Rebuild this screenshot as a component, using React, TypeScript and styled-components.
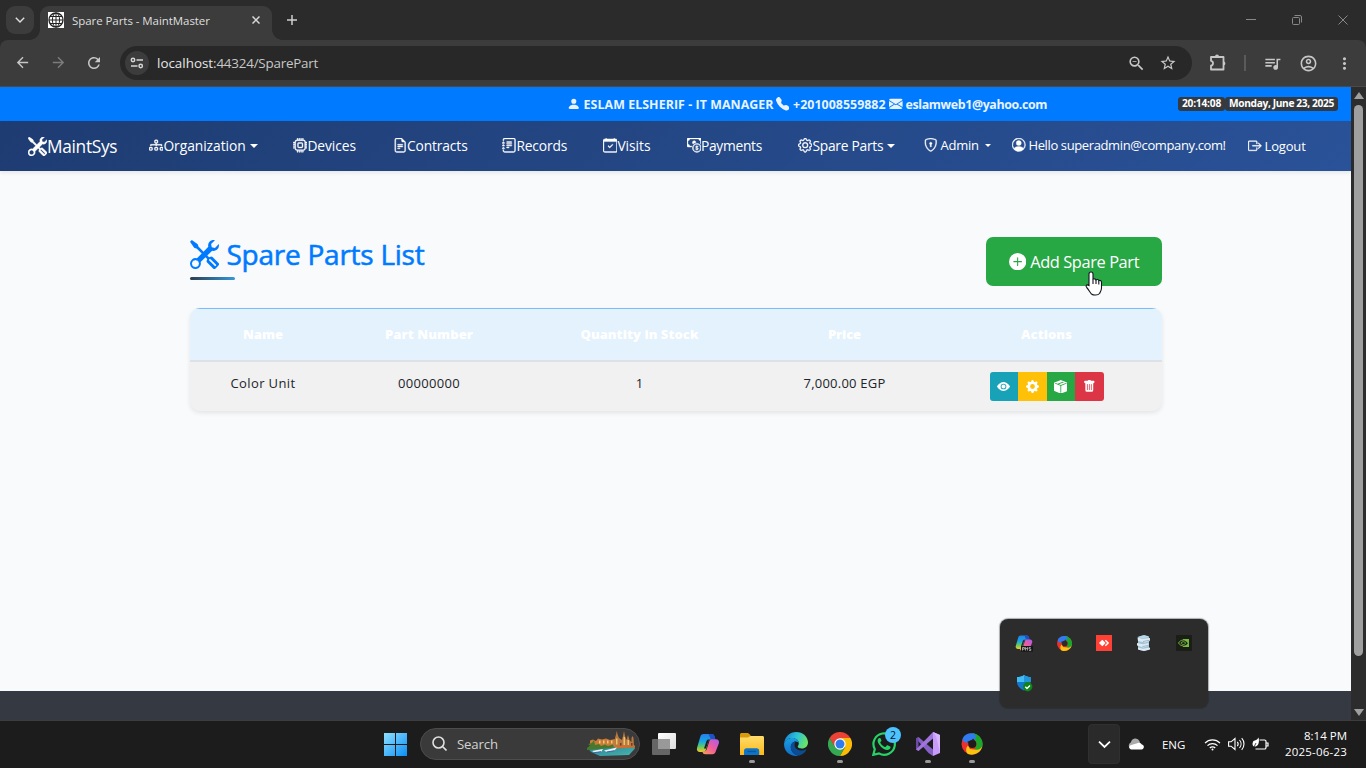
import React from 'react';
import styled, { createGlobalStyle } from 'styled-components';
import {
  BsTools, BsDiagram3, BsCpu, BsFileEarmarkText, BsJournalText, BsCalendarCheck, BsCashCoin, BsGear,
  BsShieldLock, BsPersonCircle, BsBoxArrowRight, BsPersonFill, BsTelephoneFill, BsEnvelopeFill,
  BsPlusCircleFill, BsEyeFill, BsGearFill, BsBoxSeamFill, BsTrashFill,
} from 'react-icons/bs';
import {
  MdArrowBack, MdArrowForward, MdRefresh, MdStarOutline, MdQueueMusic,
  MdOutlineAccountCircle, MdMoreVert, MdOutlineZoomOut,
} from 'react-icons/md';

const Global = createGlobalStyle`
  * { box-sizing: border-box; }
  body { margin: 0; font-family: "Open Sans", "Noto Sans", sans-serif; overflow: hidden; }
  svg { display: block; flex: none; }
`;

const Screen = styled.div`
  position: relative;
  display: flex;
  flex-direction: column;
  width: 1366px;
  height: 768px;
  overflow: hidden;
  background: #2b2b2b;
`;

const Label = styled.span<{ $ls?: number }>`
  letter-spacing: ${p => p.$ls ?? 0}px;
  white-space: nowrap;
`;

/* ---------- Browser chrome ---------- */

const TabStrip = styled.div`
  display: flex;
  height: 40px;
  padding: 6px 0 0 6px;
  background: #2b2b2b;
  color: #dfdfdf;
`;

const TabSearch = styled.div`
  display: grid;
  place-items: center;
  width: 28px;
  height: 28px;
  margin-right: 6px;
  border-radius: 9px;
  background: #3c3c3c;
`;

const Tab = styled.div`
  position: relative;
  display: flex;
  align-items: center;
  width: 232px;
  height: 34px;
  padding: 0 12px 6px 8px;
  border-radius: 9px 9px 0 0;
  background: #3c3c3c;
  font-size: 11.5px;
  &::before, &::after {
    content: "";
    position: absolute;
    bottom: 0;
    width: 10px;
    height: 10px;
  }
  &::before { left: -10px; background: radial-gradient(circle at 0 0, transparent 9.5px, #3c3c3c 10px); }
  &::after { right: -10px; background: radial-gradient(circle at 100% 0, transparent 9.5px, #3c3c3c 10px); }
`;

const TabTitle = styled(Label)`
  flex: 1;
  margin-left: 8px;
`;

const NewTab = styled.div`
  display: grid;
  place-items: center;
  width: 28px;
  height: 28px;
  margin-left: 6px;
`;

const WindowButtons = styled.div`
  display: flex;
  height: 28px;
  margin-left: auto;
  & > div { display: grid; place-items: center; width: 46px; }
`;

const Toolbar = styled.div`
  display: flex;
  align-items: center;
  height: 47px;
  padding: 0 13px 1px 13px;
  border-bottom: 1px solid #4a4a4a;
  border-radius: 8px 8px 0 0;
  background: #3c3c3c;
  color: #c7c7c7;
`;

const ToolIcon = styled.div<{ $ml?: number; $dim?: boolean }>`
  display: grid;
  place-items: center;
  width: 18px;
  height: 18px;
  margin-left: ${p => p.$ml ?? 0}px;
  color: ${p => (p.$dim ? '#7c7c7c' : 'inherit')};
`;

const Omnibox = styled.div`
  display: flex;
  align-items: center;
  width: 1072px;
  height: 34px;
  margin-left: 17px;
  padding: 0 15px 0 5px;
  border-radius: 17px;
  background: #282828;
  font-size: 13.4px;
  color: #c7c7c7;
`;

const SiteInfo = styled.div`
  display: grid;
  place-items: center;
  width: 24px;
  height: 24px;
  margin-right: 8px;
  border-radius: 50%;
  background: #3c3c3c;
`;

const Host = styled(Label)`color: #e6e6e6;`;
const Grow = styled.div`flex: 1;`;
const Separator = styled.div`
  width: 2px;
  height: 16px;
  margin-left: 17px;
  background: #5a5a5a;
`;

/* ---------- Web page ---------- */

const Viewport = styled.div`
  display: flex;
  height: 633px;
`;

const Page = styled.div`
  display: flex;
  flex-direction: column;
  width: 1351px;
  background: #f8fafc;
`;

const ContactBar = styled.div`
  display: flex;
  align-items: center;
  height: 34px;
  padding: 0 13px 0 567px;
  background: #007bff;
  color: #e9f3ff;
  font-size: 12.4px;
  font-weight: 700;
`;

const Contact = styled.div<{ $w: number; $gap: number }>`
  display: flex;
  align-items: center;
  gap: ${p => p.$gap}px;
  width: ${p => p.$w}px;
`;

const Stamp = styled.div<{ $w: number }>`
  display: grid;
  place-items: center;
  width: ${p => p.$w}px;
  height: 14px;
  border-radius: 3px;
  background: #343a40;
  color: #fff;
  font-size: 10.2px;
  line-height: 13px;
  padding-bottom: 1px;
`;

const Navbar = styled.nav`
  position: relative;
  display: flex;
  height: 50px;
  padding-left: 28px;
  background: linear-gradient(135deg, #1e3c72 0%, #2a5298 100%);
  box-shadow: 0 2px 4px rgba(0, 0, 0, 0.08);
  color: #fff;
`;

const Brand = styled.div`
  display: flex;
  align-items: center;
  width: 121px;
  padding-top: 1px;
  font-size: 17.3px;
  & svg { stroke-width: 0.4; }
`;

const NavItem = styled.div<{ $w: number; $gap?: number; $up?: number; $size?: number }>`
  display: flex;
  align-items: center;
  gap: ${p => p.$gap ?? 0}px;
  width: ${p => p.$w}px;
  padding-bottom: ${p => p.$up ?? 1}px;
  font-size: ${p => p.$size ?? 13.8}px;
  & svg { stroke-width: 0.45; }
`;

const Caret = styled.i<{ $ml: number; $s?: number }>`
  margin-left: ${p => p.$ml}px;
  border: ${p => p.$s ?? 4}px solid transparent;
  border-top-color: currentColor;
  border-bottom: 0;
`;

const Main = styled.main`
  flex: 1;
  padding: 66px 189px 0 190px;
`;

const TitleRow = styled.div`
  display: flex;
  justify-content: space-between;
  height: 71px;
`;

const Title = styled.h2`
  display: flex;
  flex-direction: column;
  height: 43px;
  margin: 0;
  color: #007bff;
  font-size: 28px;
  font-weight: 500;
  -webkit-text-stroke: 0.55px currentColor;
`;

const TitleLine = styled.div`
  display: flex;
  align-items: center;
  gap: 7.5px;
  height: 34px;
  margin-bottom: 6px;
`;

const Underline = styled.div`
  width: 45px;
  height: 3px;
  border-radius: 2px;
  background: linear-gradient(90deg, #2c3e50, #3498db);
`;

const AddButton = styled.button`
  display: flex;
  align-items: center;
  justify-content: center;
  gap: 4px;
  width: 176px;
  height: 49px;
  padding: 0;
  border: 0;
  border-radius: 7px;
  background: #28a745;
  color: #fff;
  font: 400 16.4px "Open Sans", sans-serif;
`;

const Table = styled.div`
  overflow: hidden;
  height: 103px;
  border-radius: 10px;
  background: #f1f1f1;
  box-shadow: 0 2px 5px rgba(0, 0, 0, 0.09);
  font-size: 13px;
`;

const Row = styled.div`
  display: grid;
  grid-template-columns: 146px 186px 235px 175px 229px;
  justify-items: center;
`;

const HeadRow = styled(Row)`
  align-items: center;
  height: 54px;
  padding-bottom: 1px;
  border-top: 1px solid #7abaff;
  border-bottom: 2px solid #dee2e6;
  background: #e3f2fd;
  color: #fff;
  font-weight: 800;
`;

const BodyRow = styled(Row)`
  height: 49px;
  padding-top: 10px;
  color: #212529;
  & > span { line-height: 22px; }
`;

const Actions = styled.div`
  display: flex;
  height: 29px;
  overflow: hidden;
  border-radius: 3px;
`;

const Action = styled.button<{ $bg: string; $w: number }>`
  display: grid;
  place-items: center;
  width: ${p => p.$w}px;
  padding: 0;
  border: 0;
  background: ${p => p.$bg};
  color: #fff;
`;

const Footer = styled.footer`
  height: 29px;
  background: #353a42;
`;

const Scrollbar = styled.div`
  display: flex;
  flex-direction: column;
  align-items: center;
  justify-content: space-between;
  width: 15px;
  padding: 5px 0 4px;
  background: #2c2c2c;
`;

const ScrollArrow = styled.i<{ $down?: boolean }>`
  border: 5px solid transparent;
  ${p => (p.$down ? 'border-top: 7px solid #9f9f9f; border-bottom: 0;' : 'border-bottom: 7px solid #9f9f9f; border-top: 0;')}
`;

const Thumb = styled.div`
  width: 9px;
  height: 551px;
  margin-bottom: auto;
  margin-top: 6px;
  border-radius: 5px;
  background: #9f9f9f;
`;

/* ---------- Overlays ---------- */

const TrayPopup = styled.div`
  position: absolute;
  left: 1000px;
  top: 619px;
  display: grid;
  grid-template-columns: repeat(5, 40px);
  grid-auto-rows: 40px;
  place-items: center;
  width: 208px;
  height: 89px;
  padding: 4px;
  border-radius: 8px;
  background: #2c2c2c;
  box-shadow: 0 0 1px 1px rgba(30, 30, 30, 0.35);
`;

const Pointer = styled.div`
  position: absolute;
  left: 1084px;
  top: 271px;
`;

/* ---------- Taskbar ---------- */

const Taskbar = styled.div`
  display: flex;
  align-items: center;
  height: 48px;
  padding: 0 0 1px 384px;
  border-top: 1px solid #3d3d3d;
  background: #1c1c1c;
  color: #fff;
`;

const SearchBox = styled.div`
  display: flex;
  align-items: center;
  width: 220px;
  height: 32px;
  margin-left: 13px;
  padding: 0 3px 1px 11px;
  border: 1px solid #4c4c4c;
  border-radius: 16px;
  background: #3a3a3a;
  color: #d2d2d2;
  font-size: 13.2px;
`;

const SearchLabel = styled(Label)`
  flex: 1;
  margin-left: 10px;
`;

const Apps = styled.div`
  display: flex;
  margin-left: 2px;
`;

const AppSlot = styled.div<{ $open?: boolean }>`
  position: relative;
  display: grid;
  place-items: center;
  width: 44px;
  height: 46px;
  &::after {
    content: "";
    position: absolute;
    bottom: 4px;
    width: 6px;
    height: 3px;
    border-radius: 2px;
    background: ${p => (p.$open ? '#999' : 'transparent')};
  }
`;

const Count = styled.div`
  position: absolute;
  left: 23px;
  top: 6px;
  display: grid;
  place-items: center;
  width: 16px;
  height: 16px;
  border-radius: 50%;
  background: #4cc2ff;
  color: #111;
  font-size: 10.5px;
`;

const TrayToggle = styled.div`
  display: grid;
  place-items: center;
  width: 32px;
  height: 40px;
  margin-left: 94px;
  border: 1px solid #303030;
  border-radius: 4px;
  background: #2a2a2a;
`;

const TrayItem = styled.div<{ $ml: number }>`
  margin-left: ${p => p.$ml}px;
  font-size: 11.5px;
`;

const Clock = styled.div`
  display: flex;
  flex-direction: column;
  align-items: flex-end;
  margin-left: auto;
  padding: 0 19px 1px 0;
  font-size: 11.5px;
  line-height: 16px;
`;

/* ---------- Drawings ---------- */

const Globe = () => (
  <svg width="16" height="16" viewBox="0 0 16 16" fill="none" stroke="#222" strokeWidth="1">
    <rect width="16" height="16" fill="#fff" stroke="none" />
    <circle cx="8" cy="8" r="7" strokeWidth="1.3" />
    <ellipse cx="8" cy="8" rx="3.6" ry="7" />
    <path d="M8 1v14M1 8h14M2 4.500h12M2 11.500h12" />
  </svg>
);

const Chevron = ({ s = 10, c = '#e0e0e0' }: { s?: number; c?: string }) => (
  <svg width={s} height={s} viewBox="0 0 10 10" fill="none" stroke={c} strokeWidth="1.4"><path d="M.8 2.800l4.200 4.100 4.200-4.100" /></svg>
);

const Cross = ({ s, c, w }: { s: number; c: string; w: number }) => (
  <svg width={s} height={s} viewBox={`0 0 ${s} ${s}`} stroke={c} strokeWidth={w}><path d={`M.5 .5L${s - 0.5} ${s - 0.5}M${s - 0.5} .5L.5 ${s - 0.5}`} /></svg>
);

const Puzzle = () => (
  <svg width="18" height="18" viewBox="0 0 18 18" fill="none" stroke="#c7c7c7" strokeWidth="1.800" strokeLinejoin="round">
    <path d="M2 3h12.500v12.500H2v-3.800a2.500 2.500 0 0 0 0-4.900z" />
    <path d="M6 2.500a2 2 0 0 1 4 0zM15 7.500a2 2 0 0 1 0 3.800z" fill="#c7c7c7" stroke="none" />
  </svg>
);

const Copilot = ({ s, badge }: { s: number; badge?: boolean }) => (
  <svg width={s} height={s} viewBox="0 0 24 24">
    <defs>
      <linearGradient id="cpA" x1="0" y1="0" x2="0" y2="1">
        <stop offset="0" stopColor="#2b7de9" /><stop offset=".4" stopColor="#14a5e8" /><stop offset=".7" stopColor="#5fc86a" /><stop offset="1" stopColor="#f3cb22" />
      </linearGradient>
      <linearGradient id="cpB" x1="1" y1="0" x2="0" y2="1">
        <stop offset="0" stopColor="#a95bf0" /><stop offset=".5" stopColor="#f05d9b" /><stop offset="1" stopColor="#ff9c55" />
      </linearGradient>
    </defs>
    <path d="M7.500 2h8.300c1.400 0 2.200 1 2.600 2.300l.9 3.200h-4.600c-1.300 0-2 .8-2.400 2L9.800 18c-.4 1.300-1.200 2-2.500 2H4C1.500 20 .4 18.200 1 16L4.300 4.700C4.800 2.900 5.800 2 7.500 2z" fill="url(#cpA)" />
    <path d="M12.500 2h3.500c1.400 0 2.200 1 2.600 2.300l.9 3.200h-4.500z" fill="#1b52c4" />
    <path d="M16.500 22.200H9.200c-1.400 0-2.300-1-2.700-2.300l-.2-.6h2c1.300 0 2-.7 2.400-2L13.400 9c.4-1.300 1.100-1.800 2.400-1.800h4.200c2.400 0 3.500 1.800 2.900 4l-3.200 8.200c-.6 1.800-1.500 2.800-3.200 2.800z" fill="url(#cpB)" />
    <path d="M10.500 9l1.200-1.500h2.800c-1.200.2-1.900.8-2.300 1.900l-2.200 7h-2z" fill={badge ? '#2c2c2c' : '#1c1c1c'} />
    {badge && <><rect x="8" y="16" width="16" height="7.500" fill="#161616" /><path d="M10 22v-4h2.500v2.200H10M14 22v-4l1.300 1.500 1.300-1.500v4M21 18h-2.200v2H21v2h-2.200" stroke="#ccc" strokeWidth="1" fill="none" /></>}
  </svg>
);

const Swirl = ({ s, hole }: { s: number; hole: string }) => (
  <svg width={s} height={s} viewBox="0 0 24 24">
    <circle cx="12" cy="12" r="10.500" fill="#ee2f2a" />
    <path d="M2.500 7C4 2.500 9 .500 14.500 1.500c3 1 5 3.500 4.500 7L12 7.500 7 11C4.500 10.500 2.500 9.500 2.500 7z" fill="#2f7bf0" />
    <path d="M12.500 1.200A11 11 0 0 1 22.500 14c-1.500 3.500-4.500 4.800-7.800 3.800L17 12l-2.500-4.500C17 6 16.500 2.500 12.500 1.200z" fill="#16a92c" />
    <path d="M22.500 14A11 11 0 0 1 8 22c-2.500-2-2.500-6 0-8.500L10 17l6 .8c3 .4 5-1.300 6.500-3.800z" fill="#fcc30f" />
    <circle cx="12.300" cy="12" r="4" fill={hole} />
    <path d="M8.300 12a4 4 0 0 1 1.500-3.100L7.500 9.500zM12 8a4 4 0 0 1 3.500 1.500L13 6.500z" fill={hole} />
  </svg>
);

const Windows = () => (
  <svg width="23" height="23" viewBox="0 0 23 23">
    <defs><linearGradient id="win" x1="0" y1="0" x2="1" y2="1"><stop offset="0" stopColor="#8fe0ff" /><stop offset="1" stopColor="#0a8ef5" /></linearGradient></defs>
    <path d="M0 0h11v11H0zM12 0h11v11H12zM0 12h11v11H0zM12 12h11v11H12z" fill="url(#win)" />
  </svg>
);

const Harbor = () => (
  <svg width="49" height="26" viewBox="0 0 49 26">
    <defs><linearGradient id="sea" x1="0" y1="0" x2="1" y2="1"><stop offset="0" stopColor="#247d95" /><stop offset="1" stopColor="#49b8ae" /></linearGradient></defs>
    <path d="M1 17.500l15-3h31l1 3-6 6.500-29 1-9-4z" fill="url(#sea)" />
    <path d="M3 9.500l3-1 3 1.500 2-2.500 4 1 4-1 4 1.500 5-1 2 7.500-13 2-14-1z" fill="#c97a3a" />
    <path d="M0 17l3-2.500L1 13l4-1 2-3 1 5 4-1 2 2 4-1.500 3 1.500 5-1.500 1 3-13 1.500-14 1z" fill="#47792c" />
    <path d="M12 9.500h1.500v3H12zM16 9.500h1.500v3H16zM20 9.500h1.500v3H20zM24 9.500h1.500v3H24z" fill="#f6c56c" />
    <path d="M28 16V7l1-3.500.8-3.500.8 3.500L32 7l3 2 1-4 1-5 1 5 1.500 4 1.500-5 1.500 5 2 2v-4l1-2 1 2 .5 9z" fill="#b9793f" />
    <path d="M29 7.500h1.500v6H29zM36.500 6H38v8h-1.500zM40.500 9H42v5h-1.500z" fill="#ecc26f" />
    <path d="M33 12h1.500v3H33zM44 12h1.500v3H44z" fill="#7c3b26" />
    <path d="M28 16l6-1.500 5 .5 9-.5v2l-20 1z" fill="#d06e2e" />
    <path d="M5 20l11-2-1.500 2.500-7 1zM17 19.500L30 16.500 27.500 19.500l-8 1.500z" fill="#eef2f8" />
    <path d="M7 21.700l7-1M19.500 21l8-1.300" stroke="#4065a5" />
  </svg>
);

const TaskView = () => (
  <svg width="24" height="22" viewBox="0 0 24 22">
    <defs><linearGradient id="tv" x1="0" y1="0" x2="1" y2="1"><stop offset="0" stopColor="#fff" /><stop offset="1" stopColor="#ddd" /></linearGradient></defs>
    <rect x="6" y="0" width="18" height="16" rx="1" fill="url(#tv)" />
    <rect x="0" y="6" width="18" height="16" rx="1" fill="#666" />
    <path d="M6 6h12v10H6z" fill="#999" />
  </svg>
);

const Folder = () => (
  <svg width="24" height="24" viewBox="0 0 24 24">
    <defs><linearGradient id="fo" x1="0" y1="0" x2="0" y2="1"><stop offset="0" stopColor="#ffdc6b" /><stop offset="1" stopColor="#fcb91a" /></linearGradient></defs>
    <path d="M0 2.500C0 1.700.7 1 1.500 1H8l2.500 2v3H0z" fill="#d89b0c" />
    <path d="M0 5.500h8L10.500 4H22.500c.9 0 1.500.7 1.500 1.500V23H0z" fill="url(#fo)" />
    <path d="M4 23v-4c0-1.700 1-2.700 2.500-2.700h10.200c1.500 0 2.500 1 2.500 2.700v4z" fill="#0e74c9" />
    <path d="M7.500 19.500h8.500" stroke="#085797" strokeWidth="1.300" />
  </svg>
);

const Edge = () => (
  <svg width="24" height="24" viewBox="0 0 24 24">
    <defs>
      <linearGradient id="edA" x1="0" y1=".2" x2="1" y2=".5"><stop offset="0" stopColor="#1683d6" /><stop offset=".5" stopColor="#2cc3d8" /><stop offset="1" stopColor="#6be364" /></linearGradient>
      <linearGradient id="edB" x1="0" y1="0" x2="0" y2="1"><stop offset="0" stopColor="#1b9fe2" /><stop offset="1" stopColor="#0f6cc9" /></linearGradient>
    </defs>
    <path d="M.2 11C1 4.500 6 0 12 0c7 0 12 4.800 12 10.500 0 3.800-2.800 6-6 6-2.700 0-4.300-1-4.300-2 0-.8 1.100-1.200 1.100-3.300C14.800 8.500 12 6 8.200 6 4.500 6 1.500 8 .2 11z" fill="url(#edA)" />
    <path d="M.1 11.500C1.200 8.400 4.300 6 8.200 6c3.800 0 6.600 2.500 6.600 5.200-.2-.8-1.500-1.700-3-1.700-3 0-5 2.500-5 5.500 0 4.500 4 8.400 8.200 8.500-1 .3-2 .5-3 .5C5 24-.5 18.500.1 11.500z" fill="url(#edB)" />
    <path d="M11.800 9.500c-3 0-5 2.500-5 5.500 0 4.500 4 8.700 8.700 8.500 3.300-1 5.500-3.200 6.800-5.500.3-.6-.2-.8-.7-.5-1 .5-2.500.9-4 .9-4.200 0-7-2.700-7-5.500 0-1.500.6-2.700 1.200-3.400z" fill="#0b4c93" />
  </svg>
);

const Chrome = () => (
  <svg width="24" height="24" viewBox="0 0 24 24">
    <path d="M12 12L1.600 6A12 12 0 0 1 22.400 6z" fill="#ea4335" />
    <path d="M1.600 6A12 12 0 0 0 12 24l5.200-9L12 12 6.800 15z" fill="#34a853" />
    <path d="M22.400 6A12 12 0 0 1 12 24l5.200-9L12 6z" fill="#fbbc05" />
    <path d="M1.600 6L6.800 15 12 12V6h10.400z" fill="#ea4335" />
    <path d="M1.600 6l5.200 9 1 1.500L6 18z" fill="#34a853" />
    <circle cx="12" cy="12" r="5.700" fill="#fff" />
    <circle cx="12" cy="12" r="4.500" fill="#2f7bee" />
  </svg>
);

const WhatsApp = () => (
  <svg width="24" height="24" viewBox="0 0 24 24">
    <path d="M1.300 22.800l1.500-5.600A10.700 10.700 0 1 1 7 21.400z" fill="none" stroke="#25d366" strokeWidth="2.200" />
    <path d="M8.600 6.600c-.3-.7-.6-.7-1-.7-1 0-2 1.100-2 2.900 0 1.700 1.300 3.400 1.500 3.600 2.500 3.800 6.200 5.500 8.300 5.500 1.500 0 3-1 3.100-2.500 0-.5 0-.7-.3-.8l-2.700-1.300c-.3-.1-.6-.1-.8.2l-1.100 1.400c-.2.300-.5.200-.8.100-1.700-.7-3.500-2.200-4.500-4.200-.1-.3 0-.5.2-.7l.9-1.100c.1-.2.1-.4 0-.6z" fill="#25d366" />
  </svg>
);

const VisualStudio = () => (
  <svg width="24" height="24" viewBox="0 0 24 24">
    <path d="M0 6.500L2.500 5 17 17.500V24L12.500 21z" fill="#8661c5" />
    <path d="M0 6.500L2.500 5v14L0 17.500z" fill="#6d4aa5" />
    <path d="M0 17.500L17 0v6.500L2.500 19z" fill="#a074dd" />
    <path d="M17 0l7 3v18l-7 3z" fill="#c79bfa" />
    <path d="M17 0l7 3v18l-4-17z" fill="#d9b4ff" />
  </svg>
);

const AnyDesk = () => (
  <svg width="16" height="16" viewBox="0 0 16 16">
    <rect width="16" height="16" fill="#ff4135" />
    <path d="M3 8l3.300-3.300L9.600 8l-3.300 3.300z" fill="#fff" />
    <path d="M9.300 5.200L12.100 8l-2.800 2.800" fill="none" stroke="#fff" strokeWidth="1.500" />
  </svg>
);

const ServerDisks = () => (
  <svg width="16" height="16" viewBox="0 0 16 16">
    <path d="M2 2.500C4 .300 9.500.300 13 2v12.500c-3 1.700-9 1.500-11-.5z" fill="#a3c3d6" />
    <path d="M1.500 2.500l5 1.500 7.500-1v3l-5 1.500L2 6zM1 8l6 1.300L12.500 8v3l-5 1.500L1 10.500zM2 12.500l5 1.300 7-1.300v2l-6 1.500-6-1.500z" fill="#dcebf3" />
    <path d="M7 6.500l7-1.300M6.500 11.500l6-1" stroke="#86a9c2" strokeWidth=".8" />
    <path d="M1.500 2L8 0l5.500 1.500L7 3.500z" fill="#b7d8ea" />
  </svg>
);

const Nvidia = () => (
  <svg width="16" height="16" viewBox="0 0 16 16">
    <rect width="16" height="16" fill="#1b1e17" />
    <path d="M7 4h6v8H7v-1c2.500-.3 4-1.500 4.800-2.700C10.500 6.500 9 5.500 7 5.300z" fill="#76b93f" />
    <path d="M7.500 5C5 5 3.200 6.700 2.500 8c1 1.700 2.700 2.900 5 2.900M7.500 6.700C6.300 6.700 5.300 7.300 4.900 8c.5 1 1.500 1.500 2.600 1.500C8.600 9.500 9.300 8.700 9.700 8 9.200 7.200 8.500 6.700 7.500 6.700z" fill="none" stroke="#76b93f" strokeWidth=".9" />
  </svg>
);

const Defender = () => (
  <svg width="17" height="17" viewBox="0 0 17 17">
    <path d="M8 0c2 1.500 4 2 6.500 2v5c0 4-2.500 6.500-6.500 8.500C4 13.500 1 11 1 7V2c2.800 0 5-.5 7-2z" fill="#1477ce" />
    <path d="M8 0c2 1.500 4 2 6.500 2v5H1V2c2.800 0 5-.5 7-2z" fill="#42bdf3" />
    <path d="M8 0c2 1.500 4 2 6.500 2v5H8z" fill="#2196dc" />
    <circle cx="11.700" cy="11.700" r="4.700" fill="#108418" />
    <path d="M9.300 11.800l1.700 1.700 3-3" stroke="#fff" strokeWidth="1.400" fill="none" />
  </svg>
);

const Hand = () => (
  <svg width="20" height="26" viewBox="0 0 20 26">
    <path d="M7 1c1.200 0 2 .8 2 2v5.200c.3-.6 2.600-.6 3 .7.600-.8 2.500-.5 2.800.7.800-.6 2.600-.1 2.700 1.500V17c0 3-1.500 4.200-2 5.500-1.500 2-6 2-8 .5-1.500-1.500-2.800-4.500-4.800-6.500-1.400-1.600-.2-3.500 2.300-2V3c0-1.200.8-2 2-2z" fill="#fff" stroke="#14141f" strokeWidth="1.100" />
    <path d="M9 8v5M12 9v4M14.800 10v3.500" stroke="#14141f" strokeWidth="1.100" />
  </svg>
);

const navItems = [
  { icon: BsDiagram3, text: 'Organization', w: 144, ls: -0.04, caret: 4 },
  { icon: BsCpu, text: 'Devices', w: 99.5, ls: -0.08 },
  { icon: BsFileEarmarkText, text: 'Contracts', w: 109.5, ls: -0.12 },
  { icon: BsJournalText, text: 'Records', w: 101, ls: -0.14 },
  { icon: BsCalendarCheck, text: 'Visits', w: 83.5, ls: -0.02 },
  { icon: BsCashCoin, text: 'Payments', w: 111.5, ls: -0.28 },
  { icon: BsGear, text: 'Spare Parts', w: 126, ls: -0.26, caret: 4 },
];

export default function App() {
  return (
    <Screen>
      <Global />
      <TabStrip>
        <TabSearch><Chevron /></TabSearch>
        <Tab>
          <Globe />
          <TabTitle $ls={-0.06}>Spare Parts - MaintMaster</TabTitle>
          <Cross s={8} c="#d8d8d8" w={1.5} />
        </Tab>
        <NewTab>
          <svg width="10" height="10" viewBox="0 0 10 10" stroke="#d0d0d0" strokeWidth="1.500"><path d="M5 0v10M0 5h10" /></svg>
        </NewTab>
        <WindowButtons>
          <div><svg width="10" height="10" viewBox="0 0 10 10" stroke="#888"><path d="M0 4.500h10" /></svg></div>
          <div>
            <svg width="10" height="10" viewBox="0 0 10 10" fill="none" stroke="#888"><rect x=".5" y="2.500" width="7" height="7" rx="1" /><path d="M2.500 .5H8a1.500 1.500 0 0 1 1.500 1.500v5.500" /></svg>
          </div>
          <div><Cross s={10} c="#888" w={1} /></div>
        </WindowButtons>
      </TabStrip>

      <Toolbar>
        <ToolIcon><MdArrowBack size={17} /></ToolIcon>
        <ToolIcon $ml={18} $dim><MdArrowForward size={17} /></ToolIcon>
        <ToolIcon $ml={18}><MdRefresh size={18} /></ToolIcon>
        <Omnibox>
          <SiteInfo>
            <svg width="14" height="12" viewBox="0 0 14 12" fill="none" stroke="#d5d5d5" strokeWidth="1.500"><circle cx="3" cy="3" r="1.700" /><path d="M6.500 3H13M1 9h6.500" /><circle cx="10.700" cy="9" r="1.700" /></svg>
          </SiteInfo>
          <Host>localhost</Host><Label $ls={-0.21}>:44324/SparePart</Label>
          <Grow />
          <ToolIcon><MdOutlineZoomOut size={19} /></ToolIcon>
          <ToolIcon $ml={14}><MdStarOutline size={18} /></ToolIcon>
        </Omnibox>
        <ToolIcon $ml={17}><Puzzle /></ToolIcon>
        <Separator />
        <ToolIcon $ml={17}><MdQueueMusic size={19} /></ToolIcon>
        <ToolIcon $ml={18}><MdOutlineAccountCircle size={19} /></ToolIcon>
        <ToolIcon $ml={18}><MdMoreVert size={19} /></ToolIcon>
      </Toolbar>

      <Viewport>
        <Page>
          <ContactBar>
            <Contact $w={208.5} $gap={3}><BsPersonFill size={13.6} /><Label $ls={0.06}>ESLAM ELSHERIF - IT MANAGER</Label></Contact>
            <Contact $w={113.5} $gap={4}><BsTelephoneFill size={13.6} /><Label $ls={0.03}>+201008559882</Label></Contact>
            <Contact $w={160} $gap={3}><BsEnvelopeFill size={13.6} /><Label $ls={-0.38}>eslamweb1@yahoo.com</Label></Contact>
            <Grow />
            <Stamp $w={47}><Label $ls={-0.2}>20:14:08</Label></Stamp>
            <Stamp $w={113}><Label $ls={-0.36}>Monday, June 23, 2025</Label></Stamp>
          </ContactBar>
          <Navbar>
            <Brand><BsTools size={19} /><Label $ls={-0.3}>MaintSys</Label></Brand>
            {navItems.map(({ icon: Icon, text, w, ls, caret }) => (
              <NavItem key={text} $w={w}>
                <Icon size={14.4} /><Label $ls={ls}>{text}</Label>{caret && <Caret $ml={caret} />}
              </NavItem>
            ))}
            <NavItem $w={88} $gap={3} $up={2} $size={13}>
              <BsShieldLock size={13.5} /><Label $ls={-0.25}>Admin</Label><Caret $ml={3} $s={3} />
            </NavItem>
            <NavItem $w={236} $gap={3} $up={2} $size={13}><BsPersonCircle size={13.5} /><Label $ls={-0.38}>Hello superadmin@company.com!</Label></NavItem>
            <NavItem $w={70} $gap={3} $up={0} $size={13}><BsBoxArrowRight size={13.5} /><Label $ls={-0.16}>Logout</Label></NavItem>
          </Navbar>
          <Main>
            <TitleRow>
              <Title>
                <TitleLine><BsTools size={29} /><Label $ls={-0.25}>Spare Parts List</Label></TitleLine>
                <Underline />
              </Title>
              <AddButton><BsPlusCircleFill size={17.3} /><Label $ls={-0.4}>Add Spare Part</Label></AddButton>
            </TitleRow>
            <Table>
              <HeadRow>
                <Label>Name</Label><Label $ls={0.11}>Part Number</Label><Label $ls={0.06}>Quantity in Stock</Label>
                <Label $ls={-0.1}>Price</Label><Label $ls={0.08}>Actions</Label>
              </HeadRow>
              <BodyRow>
                <Label $ls={0.38}>Color Unit</Label><Label $ls={0.32}>00000000</Label><Label>1</Label><Label $ls={0.23}>7,000.00 EGP</Label>
                <Actions>
                  <Action $bg="#17a2b8" $w={28}><BsEyeFill size={13} /></Action>
                  <Action $bg="#ffc107" $w={29}><BsGearFill size={13} /></Action>
                  <Action $bg="#28a745" $w={28}><BsBoxSeamFill size={13.6} /></Action>
                  <Action $bg="#dc3545" $w={29}><BsTrashFill size={12.6} /></Action>
                </Actions>
              </BodyRow>
            </Table>
          </Main>
          <Footer />
        </Page>
        <Scrollbar><ScrollArrow /><Thumb /><ScrollArrow $down /></Scrollbar>
      </Viewport>

      <Taskbar>
        <Windows />
        <SearchBox>
          <svg width="15" height="15" viewBox="0 0 15 15" fill="none" stroke="#e0e0e0" strokeWidth="1.600"><circle cx="6.500" cy="6.500" r="5.500" /><path d="M10.500 10.500l4 4" /></svg>
          <SearchLabel $ls={-0.15}>Search</SearchLabel>
          <Harbor />
        </SearchBox>
        <Apps>
          <AppSlot><TaskView /></AppSlot>
          <AppSlot><Copilot s={24} /></AppSlot>
          <AppSlot $open><Folder /></AppSlot>
          <AppSlot><Edge /></AppSlot>
          <AppSlot $open><Chrome /></AppSlot>
          <AppSlot><WhatsApp /><Count>2</Count></AppSlot>
          <AppSlot $open><VisualStudio /></AppSlot>
          <AppSlot $open><Swirl s={24} hole="#1c1c1c" /></AppSlot>
        </Apps>
        <TrayToggle><Chevron s={13} c="#fff" /></TrayToggle>
        <TrayItem $ml={8}>
          <svg width="16" height="12" viewBox="0 0 16 12"><path d="M1.500 10A4 4 0 0 1 3 4.200 4.500 4.500 0 0 1 11.500 3l.5 3z" fill="#aaa" /><path d="M3 11.500C1 11 .500 8.500 2.500 7.200L10 5c1.500-.5 2.800 0 3.500 1.300 3 .7 3.300 4.500 0 5.200z" fill="#fff" /></svg>
        </TrayItem>
        <TrayItem $ml={18}><Label $ls={-0.05}>ENG</Label></TrayItem>
        <TrayItem $ml={19}>
          <svg width="17" height="13" viewBox="0 0 17 13" fill="none" stroke="#fff" strokeWidth="1.200"><path d="M1 5.200a10.300 10.300 0 0 1 15 0M3.500 7.700a7 7 0 0 1 10 0M5.800 10a3.800 3.800 0 0 1 5.400 0" /><circle cx="8.500" cy="11.500" r="1" fill="#fff" stroke="none" /></svg>
        </TrayItem>
        <TrayItem $ml={7}>
          <svg width="17" height="14" viewBox="0 0 17 14" fill="none" stroke="#fff" strokeWidth="1.100"><path d="M.6 4.800h2.500L7 1.500v11L3.100 9.200H.6zM9.300 4.800a3.500 3.500 0 0 1 0 4.400M11.500 3a6 6 0 0 1 0 8M13.700 1.200a8.500 8.500 0 0 1 0 11.600" /></svg>
        </TrayItem>
        <TrayItem $ml={7}>
          <svg width="17" height="14" viewBox="0 0 17 14" fill="none" stroke="#fff" strokeWidth="1.200"><path d="M7.500 3h5a1.500 1.500 0 0 1 1.500 1.500v6a1.500 1.500 0 0 1-1.500 1.500H3.500M14.500 6H16v3h-1.500" /><path d="M6.500.500C7.500 4 7 8.500 3.500 9.500 0 10 0 6 1.500 4 3 3.500 5.500 3 6.500.500z" fill="#fff" stroke="none" /><path d="M1 12l3-6" stroke="#1c1c1c" strokeWidth=".8" /></svg>
        </TrayItem>
        <Clock><Label>8:14 PM</Label><Label $ls={0.2}>2025-06-23</Label></Clock>
      </Taskbar>

      <TrayPopup>
        <Copilot s={18} badge /><Swirl s={17} hole="#2c2c2c" /><AnyDesk /><ServerDisks /><Nvidia /><Defender />
      </TrayPopup>
      <Pointer><Hand /></Pointer>
    </Screen>
  );
}
